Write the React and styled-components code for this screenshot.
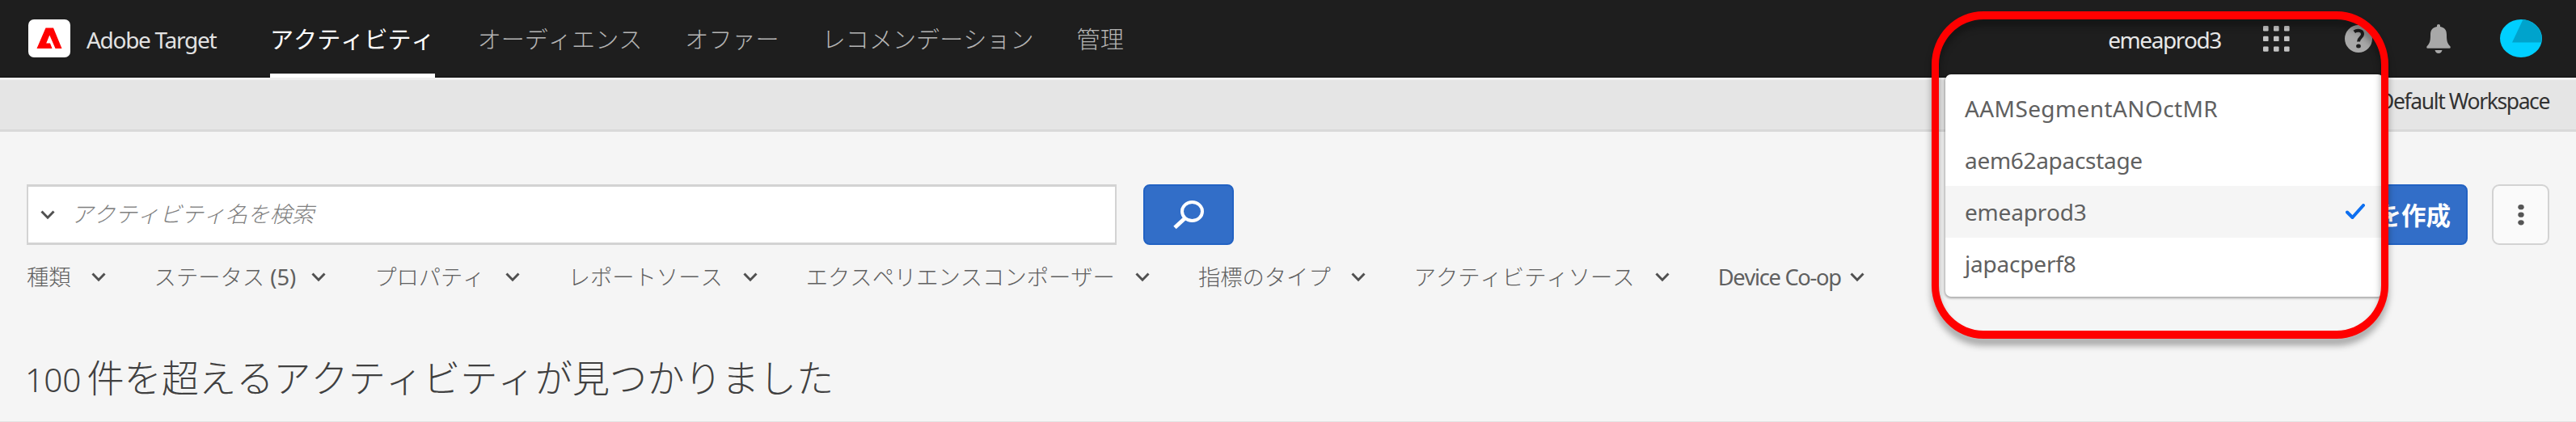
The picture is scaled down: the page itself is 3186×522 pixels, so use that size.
import React from 'react';
import styled, { createGlobalStyle } from 'styled-components';

const Global = createGlobalStyle`
  * { box-sizing: border-box; }
  body {
    margin: 0;
    background: #f5f5f5;
    font-family: "Noto Sans", "Noto Sans CJK JP", sans-serif;
    font-kerning: none;
  }
`;

const Page = styled.div`
  position: relative;
  display: flex;
  flex-direction: column;
  width: 3186px;
  height: 522px;
  overflow: hidden;
  background: #f5f5f5;
  border-bottom: 1px solid #e4e4e4;
`;

/* ---------- Top bar ---------- */

const TopBar = styled.header`
  display: flex;
  justify-content: space-between;
  height: 96px;
  padding: 0 42px 0 35px;
  background: #1e1e1e;
  border-bottom: 1px solid #0c0c0c;
`;

const Brand = styled.div`
  display: flex;
  align-items: center;
  width: 299px;
`;

const BrandName = styled.span`
  margin-left: 20px;
  color: #e2e2e2;
  font-size: 28px;
  font-kerning: normal;
  line-height: 40px;
  letter-spacing: -1.3px;
  padding-top: 2px;
  white-space: nowrap;
`;

const Nav = styled.nav`
  display: flex;
  flex: 1;
  gap: 53px;
`;

const NavItem = styled.a`
  height: 96px;
  font-family: "Noto Sans CJK JP", sans-serif;
  font-size: 29.1px;
  font-weight: ${(p) => (p.$active ? 400 : 300)};
  line-height: 95px;
  white-space: nowrap;
  color: ${(p) => (p.$active ? '#ffffff' : '#b4b4b4')};
  border-bottom: 5px solid ${(p) => (p.$active ? '#ffffff' : 'transparent')};
`;

const Tools = styled.div`
  display: flex;
  align-items: center;
`;

const Org = styled.div`
  margin-right: 52px;
  padding-top: 3px;
  color: #e8e8e8;
  font-size: 28px;
  line-height: 40px;
  letter-spacing: -1.4px;
`;

const Tool = styled.svg`
  display: block;
  margin-right: ${(p) => p.$gap || 0}px;
`;

/* ---------- Workspace strip ---------- */

const WorkspaceBar = styled.div`
  display: flex;
  justify-content: flex-end;
  height: 67px;
  padding: 6px 33px 0 0;
  background: #e5e5e5;
  border-top: 3px solid #f0f0f0;
  border-bottom: 3px solid #d9d9d9;
`;

const WorkspaceName = styled.span`
  color: #323232;
  font-size: 26.5px;
  font-kerning: normal;
  line-height: 40px;
  letter-spacing: -1.4px;
`;

/* ---------- Content ---------- */

const Main = styled.main`
  display: flex;
  flex-direction: column;
  padding: 65px 33px 0 33px;
`;

const SearchRow = styled.div`
  display: flex;
  height: 75px;
`;

const SearchBox = styled.div`
  display: flex;
  align-items: center;
  width: 1348px;
  padding: 0 15px;
  background: #ffffff;
  border: 3px solid #d3d3d3;
  border-width: 3px 2px;
`;

const Placeholder = styled.span`
  margin-left: 20px;
  color: #808080;
  font-family: "Noto Sans CJK JP", sans-serif;
  font-size: 27.3px;
  font-weight: 300;
  font-style: italic;
  line-height: 40px;
  padding-bottom: 5px;
`;

const SearchButton = styled.button`
  display: flex;
  align-items: center;
  justify-content: center;
  width: 112px;
  margin: 0 auto 0 33px;
  padding: 0;
  background: #326ec8;
  border: 2px solid #2262c3;
  border-radius: 8px;
`;

const CreateButton = styled.button`
  padding: 0 19px 2px 30px;
  margin-right: 30px;
  background: #326ec8;
  border: 2px solid #2262c3;
  border-radius: 8px;
  color: #ffffff;
  font-family: "Noto Sans CJK JP", sans-serif;
  font-size: 30.5px;
  font-weight: 700;
  line-height: 40px;
  white-space: nowrap;
`;

const MoreButton = styled.button`
  display: flex;
  align-items: center;
  justify-content: center;
  width: 71px;
  padding: 0;
  background: #fafafa;
  border: 2px solid #d3d3d3;
  border-radius: 9px;
`;

const Filters = styled.div`
  display: flex;
  gap: 60px;
  margin-top: 20px;
`;

const Filter = styled.div`
  display: flex;
  align-items: center;
  gap: ${(p) => p.$gap}px;
  color: #606060;
  font-size: 27.3px;
  font-weight: 300;
  line-height: 40px;
  white-space: nowrap;
`;

const Latin = styled.span`
  font-weight: 400;
  letter-spacing: ${(p) => p.$tracking || 0}px;
`;

const Heading = styled.h1`
  margin: 75px 0 0 -2px;
  color: #404040;
  font-size: 46.2px;
  font-weight: 300;
  line-height: 60px;
  white-space: nowrap;
`;

const Count = styled.span`
  margin-right: 7px;
  font-size: 40.5px;
  font-weight: 300;
`;

/* ---------- Organisation menu and highlight ---------- */

const Menu = styled.ul`
  position: absolute;
  left: 2406px;
  top: 92px;
  width: 542px;
  height: 275px;
  margin: 0;
  padding: 10px 0 0;
  list-style: none;
  background: #ffffff;
  border-radius: 7px;
  box-shadow: 0 1px 3px 1px rgba(0, 0, 0, 0.32);
`;

const MenuItem = styled.li`
  display: flex;
  align-items: center;
  justify-content: space-between;
  height: 64px;
  padding: 0 23px 0 24px;
  background: ${(p) => (p.$selected ? '#f5f5f5' : '#ffffff')};
  color: #606060;
  font-size: 28px;
  line-height: 65px;
  letter-spacing: ${(p) => p.$tracking || 0}px;
`;

const Highlight = styled.div`
  position: absolute;
  left: 2389px;
  top: 14px;
  width: 565px;
  height: 405px;
  border: solid #ff0000;
  border-width: 10px 9px;
  border-radius: 64px / 66px;
  filter: drop-shadow(0 8px 4px rgba(0, 0, 0, 0.35));
`;

function Logo() {
  return (
    <Tool width="52" height="47" viewBox="0 0 52 47" aria-label="Adobe">
      <rect width="52" height="47" rx="7" fill="#ffffff" />
      <path d="M10.5 36 L21.5 10.5 H31 L41.5 36 H33.5 L26.3 19.5 L22.2 29.5 H27 L29.5 36 Z" fill="#ff0000" />
    </Tool>
  );
}

function GridIcon() {
  return (
    <Tool width="33" height="32" viewBox="0 0 33 32" fill="#c3c3c3" $gap={68}>
      {[0, 12.7, 25.4].map((y) =>
        [0, 13, 26].map((x) => <rect key={`${x}-${y}`} x={x} y={y} width="6.6" height="6.4" rx="1.2" />)
      )}
    </Tool>
  );
}

function HelpIcon() {
  return (
    <Tool width="34" height="34" viewBox="0 0 34 34" $gap={67}>
      <ellipse cx="17" cy="17" rx="17" ry="17" fill="#a8a8a8" />
      <path d="M11.8 8.4 C15 5.8 22 6 22 11.2 C22 15.2 17 15.6 17 20.5" fill="none" stroke="#1e1e1e" strokeWidth="4" />
      <ellipse cx="17" cy="26" rx="2.9" ry="2.5" fill="#1e1e1e" />
    </Tool>
  );
}

function BellIcon() {
  return (
    <Tool width="30" height="36" viewBox="0 0 30 36" fill="#a8a8a8" $gap={61}>
      <path d="M13 3 V1.5 Q13 0 15 0 Q17 0 17 1.5 V3 C22.5 4 25 7 25 13 C25 21.5 26 23.5 29.4 27.3 Q30.4 29.8 28.5 29.8 H1.5 Q-.4 29.8 .6 27.3 C4 23.5 5 21.5 5 13 C5 7 7.5 4 13 3 Z" />
      <path d="M10.5 32 H19.5 Q18.5 36 15 36 Q11.5 36 10.5 32 Z" />
    </Tool>
  );
}

function Avatar() {
  return (
    <Tool width="52" height="47" viewBox="0 0 52 47">
      <ellipse cx="26" cy="23.5" rx="26" ry="23.5" fill="#00cfff" />
      <path d="M28.5 .1 A26 23.5 0 0 1 51 28.5 H15 Z" fill="#00a3cc" />
    </Tool>
  );
}

function Chevron() {
  return (
    <svg width="18" height="12" viewBox="0 0 18 12" fill="none" stroke="#505050" strokeWidth="3">
      <path d="M1.5 1.5 L9 9.2 L16.5 1.5" />
    </svg>
  );
}

function SearchIcon() {
  return (
    <svg width="38" height="36" viewBox="0 0 38 36" fill="none" stroke="#ffffff">
      <ellipse cx="23.5" cy="13.5" rx="12.5" ry="11.5" strokeWidth="4" />
      <path d="M14.5 22 L2 33.5" strokeWidth="5" />
    </svg>
  );
}

function CheckIcon() {
  return (
    <svg width="24" height="20" viewBox="0 0 24 20" fill="none" stroke="#0d6ff0" strokeWidth="4">
      <path d="M2 10.5 L8.5 17 L22 2" strokeLinecap="round" strokeLinejoin="round" />
    </svg>
  );
}

function MoreIcon() {
  return (
    <svg width="8" height="26" viewBox="0 0 8 26" fill="#555555">
      <ellipse cx="4" cy="3.2" rx="3.7" ry="3.1" />
      <ellipse cx="4" cy="12.7" rx="3.7" ry="3.1" />
      <ellipse cx="4" cy="22.3" rx="3.7" ry="3.1" />
    </svg>
  );
}

const navItems = ['アクティビティ', 'オーディエンス', 'オファー', 'レコメンデーション', '管理'];

const filters = [
  { label: '種類' },
  { label: 'ステータス', count: '(5)', gap: 19 },
  { label: 'プロパティ' },
  { label: 'レポートソース' },
  { label: 'エクスペリエンスコンポーザー' },
  { label: '指標のタイプ' },
  { label: 'アクティビティソース' },
  { latin: 'Device Co-op', gap: 11 },
];

const orgs = [
  { name: 'AAMSegmentANOctMR', tracking: 0.4 },
  { name: 'aem62apacstage', tracking: -0.3 },
  { name: 'emeaprod3', selected: true, tracking: -0.2 },
  { name: 'japacperf8', tracking: -0.2 },
];

export default function App() {
  return (
    <Page>
      <Global />
      <TopBar>
        <Brand>
          <Logo />
          <BrandName>Adobe Target</BrandName>
        </Brand>
        <Nav>
          {navItems.map((label, i) => (
            <NavItem key={label} $active={i === 0}>{label}</NavItem>
          ))}
        </Nav>
        <Tools>
          <Org>emeaprod3</Org>
          <GridIcon />
          <HelpIcon />
          <BellIcon />
          <Avatar />
        </Tools>
      </TopBar>
      <WorkspaceBar>
        <WorkspaceName>Default Workspace</WorkspaceName>
      </WorkspaceBar>
      <Main>
        <SearchRow>
          <SearchBox>
            <Chevron />
            <Placeholder>アクティビティ名を検索</Placeholder>
          </SearchBox>
          <SearchButton aria-label="検索"><SearchIcon /></SearchButton>
          <CreateButton>を作成</CreateButton>
          <MoreButton><MoreIcon /></MoreButton>
        </SearchRow>
        <Filters>
          {filters.map(({ label, count, latin, gap = 25 }) => (
            <Filter key={label || latin} $gap={gap}>
              <span>
                {label}
                {count && <Latin> {count}</Latin>}
                {latin && <Latin $tracking={-1.3}>{latin}</Latin>}
              </span>
              <Chevron />
            </Filter>
          ))}
        </Filters>
        <Heading>
          <Count>100</Count>件を超えるアクティビティが見つかりました
        </Heading>
      </Main>
      <Menu>
        {orgs.map(({ name, selected, tracking }) => (
          <MenuItem key={name} $selected={selected} $tracking={tracking}>
            {name}
            {selected && <CheckIcon />}
          </MenuItem>
        ))}
      </Menu>
      <Highlight />
    </Page>
  );
}
